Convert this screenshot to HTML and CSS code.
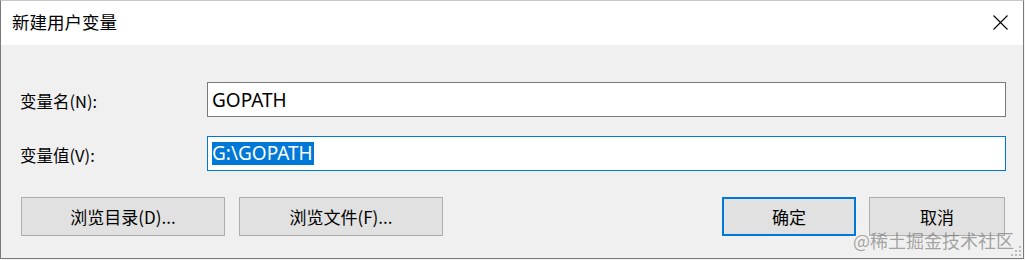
FILE: index.html
```html
<!DOCTYPE html>
<html lang="zh-CN">
<head>
<meta charset="utf-8">
<title>新建用户变量</title>
<link rel="stylesheet" href="styles.css">
</head>
<body>
<div class="window">
  <div class="titlebar">
    <span class="title">新建用户变量</span>
    <svg class="close" width="15" height="15" viewBox="0 0 15 15"><path d="M0.5 0.5 L14.5 14.5 M14.5 0.5 L0.5 14.5" stroke="#000" stroke-width="1.1" fill="none"/></svg>
  </div>
  <div class="content">
    <div class="row first">
      <label class="label">变量名(N):</label>
      <div class="input">GOPATH</div>
    </div>
    <div class="row second">
      <label class="label">变量值(V):</label>
      <div class="input focused"><span class="sel">G:\GOPATH</span></div>
    </div>
    <div class="buttons">
      <div class="group">
        <div class="btn wide">浏览目录(D)...</div>
        <div class="btn wide">浏览文件(F)...</div>
      </div>
      <div class="group right">
        <div class="btn default">确定</div>
        <div class="btn narrow">取消</div>
      </div>
    </div>
  </div>
  <div class="watermark">@稀土掘金技术社区</div>
  <svg class="grip" width="12" height="12" viewBox="0 0 12 12">
    <rect x="9" y="1" width="2" height="2" fill="#bdbdbd"/>
    <rect x="5" y="5" width="2" height="2" fill="#bdbdbd"/>
    <rect x="9" y="5" width="2" height="2" fill="#bdbdbd"/>
    <rect x="1" y="9" width="2" height="2" fill="#bdbdbd"/>
    <rect x="5" y="9" width="2" height="2" fill="#bdbdbd"/>
    <rect x="9" y="9" width="2" height="2" fill="#bdbdbd"/>
  </svg>
</div>
</body>
</html>
```
FILE: styles.css
```css
html, body {
  margin: 0;
  padding: 0;
  background: #f4f4f4;
}
body {
  width: 1025px;
  height: 260px;
  overflow: hidden;
  font-family: "Noto Sans", "Noto Sans CJK SC", sans-serif;
  color: #000;
}
.window {
  position: relative;
  width: 1022px;
  height: 257px;
  border: 1px solid #7a7a7a;
  border-top-color: #c8c8c8;
  background: #f0f0f0;
  display: flex;
  flex-direction: column;
}
.titlebar {
  height: 44px;
  background: #fff;
  display: flex;
  align-items: center;
  justify-content: space-between;
  padding: 0 15px 0 11px;
}
.title {
  font-family: "Noto Sans CJK SC", sans-serif;
  font-size: 17.5px;
  line-height: 20px;
  margin-top: -3px;
}
.close {
  margin-top: -2px;
}
.content {
  flex: 1;
  display: flex;
  flex-direction: column;
  padding: 37px 17px 0 19px;
}
.row {
  display: flex;
  align-items: center;
  height: 35px;
}
.row.second {
  margin-top: 19px;
}
.label {
  width: 187px;
  font-family: "Noto Sans CJK SC", sans-serif;
  font-size: 16.5px;
  padding-top: 3px;
}
.input {
  flex: 1;
  height: 33px;
  border: 1px solid #7a7a7a;
  background: #fff;
  box-sizing: content-box;
  display: flex;
  align-items: center;
  padding-left: 4px;
  font-size: 19px;
}
.input.focused {
  border-color: #0078d7;
}
.sel {
  background: #0078d7;
  color: #fff;
  line-height: 23px;
  padding-right: 1px;
}
.buttons {
  display: flex;
  justify-content: space-between;
  margin-top: 26px;
  padding-left: 1px;
  padding-right: 1px;
}
.group {
  display: flex;
  gap: 14px;
}
.group.right {
  gap: 13px;
}
.btn {
  height: 37px;
  box-sizing: content-box;
  border: 1px solid #adadad;
  background: #e1e1e1;
  display: flex;
  align-items: center;
  justify-content: center;
  font-family: "Noto Sans CJK SC", sans-serif;
  font-size: 17px;
}
.btn.wide {
  width: 202px;
}
.btn.narrow {
  width: 134px;
}
.btn.default {
  border: 2px solid #0078d7;
  height: 35px;
  width: 130px;
}
.watermark {
  position: absolute;
  left: 852px;
  top: 226px;
  font-family: "Noto Sans CJK SC", sans-serif;
  font-size: 18px;
  line-height: 26px;
  color: rgba(110, 110, 110, 0.6);
  white-space: nowrap;
}
.grip {
  position: absolute;
  right: 1px;
  bottom: 1px;
}
```
